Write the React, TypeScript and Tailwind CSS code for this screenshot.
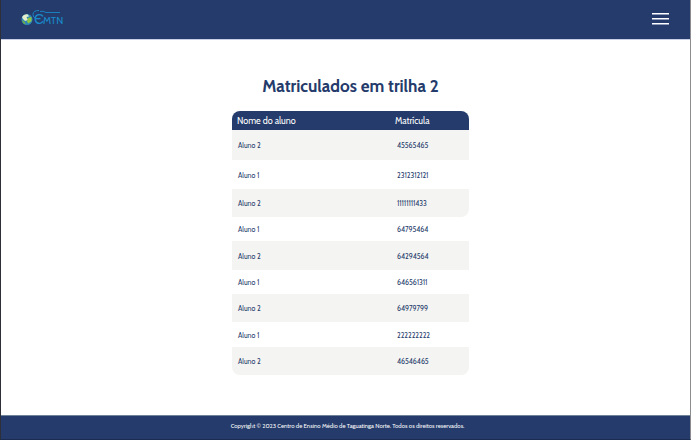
type Student = { name: string; code: string; height: string };

const students: Student[] = [
  { name: 'Aluno 2', code: '45565465', height: 'h-[30px]' },
  { name: 'Aluno 1', code: '2312312121', height: 'h-[29px]' },
  { name: 'Aluno 2', code: '11111111433', height: 'h-[28px]' },
  { name: 'Aluno 1', code: '64795464', height: 'h-[24px]' },
  { name: 'Aluno 2', code: '64294564', height: 'h-[29px]' },
  { name: 'Aluno 1', code: '646561311', height: 'h-[24px]' },
  { name: 'Aluno 2', code: '64979799', height: 'h-[28px]' },
  { name: 'Aluno 1', code: '222222222', height: 'h-[25px]' },
  { name: 'Aluno 2', code: '46546465', height: 'h-[28px]' },
];

function Logo() {
  return (
    <svg viewBox="0 0 44 18" className="h-[18px] w-11" role="img" aria-label="CEMTN">
      <circle cx="7" cy="10.500" r="5.500" fill="#2f86b8" />
      <path d="M2 8 Q4 4.500 8 5.500 L9 7.500 L6.500 8 L8 11 L5 12 L3 10Z" fill="#e3edc9" />
      <path d="M8 9 L11.500 8 L11.500 12 L8.500 14.500 L7 12.500Z" fill="#8dc63f" />
      <path d="M2 11 L5 13 L5.500 15.500 Q2.500 14.500 2 11Z" fill="#6cae45" />
      <path d="M19 1.500 Q13 1.500 13 5.500 Q13 8.500 15.500 9" fill="none" stroke="#1a86c4" strokeWidth="1" />
      <path d="M20 2.500 Q23 1.500 26 3.500 H40" fill="none" stroke="#1a7fbd" strokeWidth="1" />
      <text x="14" y="15" fill="#1a8ccc">
        <tspan fontSize="14" fontFamily="Liberation Sans, sans-serif">Є</tspan>
        <tspan x="23" fontSize="10" fontFamily="Cabin, Lato, sans-serif">MTN</tspan>
      </text>
    </svg>
  );
}

export default function App() {
  return (
    <div className="flex min-h-screen flex-col border-r border-b border-l border-r-[#8d8d91] border-b-[#1c2c50] border-l-[#2d3038] bg-white font-['Cabin',Lato,sans-serif] text-[#243b6b]">
      <header className="flex h-10 items-center justify-between border-b border-[#c9d0e6] bg-[#243b6b] pr-[21px] pl-[19px]">
        <a href="#" className="-mt-1">
          <Logo />
        </a>
        <button type="button" aria-label="Menu" className="-mt-px flex w-[17px] flex-col gap-[3px]">
          <span className="h-0.5 w-full border-b border-[#8f9bb8] bg-white" />
          <span className="h-0.5 w-full border-b border-[#8f9bb8] bg-white" />
          <span className="h-0.5 w-full border-b border-[#8f9bb8] bg-white" />
        </button>
      </header>

      <main className="flex flex-1 flex-col items-center pt-[34px] pb-10 pl-[10px]">
        <h1 className="text-[17px] leading-6 font-bold">Matriculados em trilha 2</h1>
        <table className="mt-[13px] w-full max-w-[237px] table-fixed border-separate border-spacing-0 overflow-hidden rounded-[8px] text-left">
          <thead>
            <tr className="h-[19px] bg-[#243b6b] text-[9px] leading-3 text-white">
              <th scope="col" className="w-[163px] p-0 pl-[5px] font-normal">Nome do aluno</th>
              <th scope="col" className="p-0 font-normal">Matrícula</th>
            </tr>
          </thead>
          <tbody className="text-[7px] leading-2">
            {students.map((student, i) => (
              <tr key={i} className={`${student.height} ${i % 2 === 0 ? 'bg-[#f4f4f2]' : 'bg-white'}`}>
                <td className="p-0 pt-0.5 pl-[6px]">{student.name}</td>
                <td className={`p-0 pt-0.5 pl-[2px] ${i === 2 ? 'rounded-br-[8px]' : ''}`}>{student.code}</td>
              </tr>
            ))}
          </tbody>
        </table>
      </main>

      <footer className="flex h-6 items-start justify-center border-t border-[#6f8398] bg-[#243b6b] pt-1.5 pl-1 text-[6px] leading-2 text-white">
        <p>Copyright © 2023 Centro de Ensino Médio de Taguatinga Norte. Todos os direitos reservados.</p>
      </footer>
    </div>
  );
}
